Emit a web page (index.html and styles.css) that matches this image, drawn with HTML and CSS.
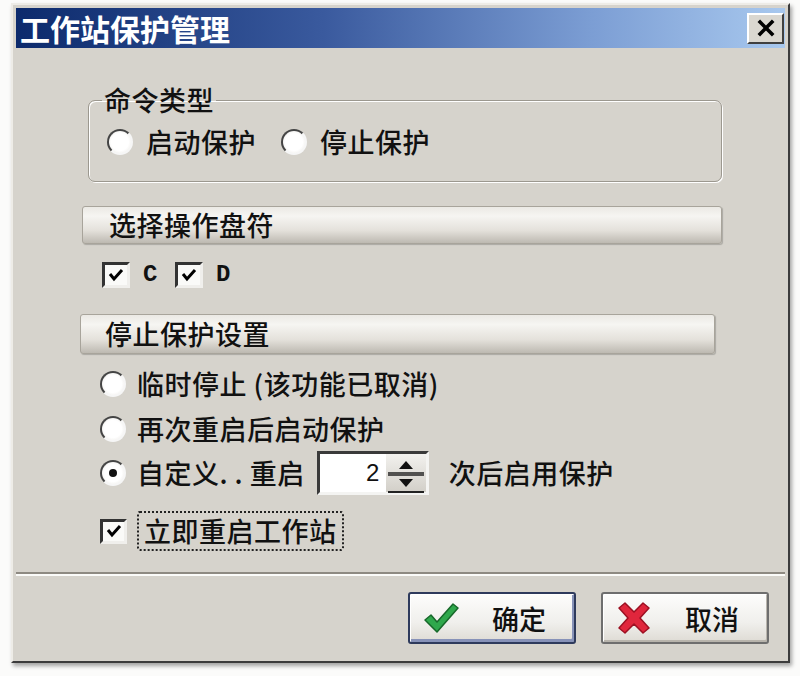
FILE: index.html
```html
<!DOCTYPE html>
<html>
	<head>
		<meta charset="utf-8">
		<link rel="stylesheet" href="styles.css">
	</head>
	<body>
		<div class="window">
			<div class="titlebar">
				<span class="title">工作站保护管理</span>
				<span class="close">
					<svg viewBox="0 0 20 18" width="24" height="22">
						<path d="M4 3 L16 15 M16 3 L4 15" stroke="#000" stroke-width="3"/>
					</svg>
				</span>
			</div>
			<div class="content">
				<fieldset class="group">
					<legend>命令类型</legend>
					<div class="row">
						<span class="radio"></span>
						<span class="label">启动保护</span>
						<span class="radio left-27"></span>
						<span class="label">停止保护</span>
					</div>
				</fieldset>
				<div class="bar bar-drive">选择操作盘符</div>
				<div class="drives">
					<span class="check">
						<svg viewBox="0 0 20 20" width="20" height="20"><path d="M4 9 L8 14 L16 5" fill="none" stroke="#000" stroke-width="3"/></svg>
					</span>
					<span class="letter">C</span>
					<span class="check">
						<svg viewBox="0 0 20 20" width="20" height="20"><path d="M4 9 L8 14 L16 5" fill="none" stroke="#000" stroke-width="3"/></svg>
					</span>
					<span class="letter">D</span>
				</div>
				<div class="bar bar-stop">停止保护设置</div>
				<div class="opts">
					<div class="line line-1">
						<span class="radio"></span>
						<span class="label">临时停止 (该功能已取消)</span>
					</div>
					<div class="line line-2">
						<span class="radio"></span>
						<span class="label">再次重启后启动保护</span>
					</div>
					<div class="line line-3">
						<span class="radio on"></span>
						<span class="label">自定义. . 重启</span>
						<div class="spin">
							<span class="spin-value">2</span>
							<span class="spin-btns">
								<svg viewBox="0 0 40 40" width="40" height="40">
									<path d="M2 19 H38 M2 21 H38" stroke="#222" stroke-width="1.5"/>
									<path d="M2 38 H38" stroke="#222" stroke-width="2"/>
									<path d="M13 15 L20 7 L27 15 Z" fill="#111"/>
									<path d="M13 25 L20 33 L27 25 Z" fill="#111"/>
								</svg>
							</span>
						</div>
						<span class="label left-20">次后启用保护</span>
					</div>
					<div class="line line-4">
						<span class="check small">
							<svg viewBox="0 0 20 20" width="20" height="20"><path d="M4 9 L8 14 L16 5" fill="none" stroke="#000" stroke-width="3"/></svg>
						</span>
						<span class="focus">立即重启工作站</span>
					</div>
				</div>
			</div>
			<div class="sep"></div>
			<div class="footer">
				<button class="btn btn-default">
					<svg viewBox="0 0 36 32" width="36" height="32">
						<path d="M2 18 L8 13 L14 20 L30 2 L35 6 L14 30 Z" fill="#2fa84c" stroke="#17682a" stroke-width="1.5" stroke-linejoin="round"/>
					</svg>
					<span class="btn-text">确定</span>
				</button>
				<button class="btn">
					<svg viewBox="0 0 36 32" width="36" height="32">
						<path d="M3 6 L9 1 L18 10 L27 1 L33 6 L24 16 L33 26 L27 31 L18 22 L9 31 L3 26 L12 16 Z" fill="#e0263c" stroke="#9c1022" stroke-width="1.5" stroke-linejoin="round"/>
					</svg>
					<span class="btn-text">取消</span>
				</button>
			</div>
		</div>
	</body>
</html>
```

FILE: styles.css
```css
*{
	margin: 0;
	padding: 0;
	box-sizing: border-box;
}
html,body{
	height: 100%;
	width: 100%;
}
body{
	background: #fbfbfa;
	font-family: "Noto Sans CJK SC", "Liberation Sans", sans-serif;
	font-size: 27px;
	font-weight: 500;
	letter-spacing: 0.5px;
	color: #111;
}
.window{
	margin: 3px 0 0 11px;
	width: 779px;
	height: 660px;
	padding: 3px;
	background: #d6d3cc;
	border: 2px solid;
	border-color: #eeece7 #3c3c3c #3c3c3c #eeece7;
	box-shadow: 2px 3px 4px rgba(0,0,0,.35);
}
.titlebar{
	height: 40px;
	display: flex;
	align-items: center;
	justify-content: space-between;
	padding: 0 1px 0 4px;
	background: linear-gradient(to right, #0c2a6c, #3a5a9e 40%, #7c9ed4 75%, #a8c8ee);
}
.title{
	color: #fff;
	font-weight: bold;
	font-size: 30px;
	line-height: 40px;
	letter-spacing: 0;
}
.close{
	width: 37px;
	height: 31px;
	display: flex;
	align-items: center;
	justify-content: center;
	background: #dad7d0;
	border: 2px solid;
	border-color: #fff #404040 #404040 #fff;
}
.content{
	padding-left: 66px;
}
.group{
	margin: 38px 0 0 6px;
	width: 634px;
	padding: 13px 0 24px 18px;
	border: 1px solid #9c988f;
	border-radius: 7px;
	box-shadow: inset 1px 1px 0 #fff, 1px 1px 0 #fff;
}
.group legend{
	line-height: 28px;
	padding: 0 2px;
	margin-left: -5px;
}
.row{
	display: flex;
	align-items: center;
	height: 30px;
}
.label{
	line-height: 30px;
	white-space: nowrap;
}
.radio{
	width: 26px;
	height: 26px;
	flex: none;
	margin-right: 13px;
	border-radius: 50%;
	border: 2px solid;
	border-color: #444 #f6f6f6 #f6f6f6 #444;
	background: radial-gradient(circle, #fff 55%, #e8e6e1);
	display: flex;
	align-items: center;
	justify-content: center;
}
.radio.on::after{
	content: "";
	width: 8px;
	height: 8px;
	border-radius: 50%;
	background: #111;
}
.left-27{
	margin-left: 25px;
}
.left-20{
	margin-left: 20px;
}
.bar{
	height: 38px;
	width: 640px;
	line-height: 36px;
	padding-left: 26px;
	border: 1px solid #a8a49b;
	border-radius: 3px;
	background: linear-gradient(#ebe9e4, #f6f5f2 25%, #e4e1db 65%, #bdb9b1);
	box-shadow: 1px 1px 1px rgba(0,0,0,.2);
}
.bar-drive{
	margin-top: 24px;
}
.bar-stop{
	margin: 27px 0 0 -2px;
	width: 635px;
	height: 40px;
	line-height: 38px;
	padding-left: 24px;
}
.drives{
	margin: 18px 0 0 20px;
	height: 25px;
	display: flex;
	align-items: center;
}
.check{
	width: 28px;
	height: 26px;
	flex: none;
	display: flex;
	align-items: center;
	justify-content: center;
	background: #fafaf8;
	border: 3px solid;
	border-color: #333 #f0efec #f0efec #333;
}
.letter{
	font-family: "Liberation Mono", monospace;
	font-size: 24px;
	font-weight: bold;
	margin: 0 17px 0 13px;
}
.opts{
	margin-left: 18px;
	margin-top: 7px;
}
.line{
	display: flex;
	align-items: center;
	height: 44px;
}
.line-1{
	height: 46px;
}
.line .radio{
	margin-right: 11px;
}
.line-4{
	margin-top: 16px;
	height: 40px;
}
.check.small{
	width: 27px;
	height: 25px;
}
.focus{
	margin-left: 10px;
	height: 40px;
	line-height: 36px;
	padding: 0 5px;
	border: 2px dotted #222;
	border-radius: 3px;
	white-space: nowrap;
}
.spin{
	margin-left: 12px;
	width: 112px;
	height: 44px;
	display: flex;
	align-items: center;
	background: #fff;
	border: 3px solid;
	border-color: #3a3a3a #f4f4f2 #f4f4f2 #3a3a3a;
}
.spin-value{
	flex: 1;
	text-align: right;
	padding-right: 6px;
	font-family: "Liberation Sans", sans-serif;
	font-size: 24px;
}
.spin-btns{
	width: 40px;
	height: 38px;
	display: flex;
	background: linear-gradient(#f2f1ee, #d2cfc8);
}
.sep{
	margin-top: 21px;
	height: 4px;
	border-top: 2px solid #8e8a82;
	border-bottom: 2px solid #fbfbf9;
}
.footer{
	display: flex;
	justify-content: flex-end;
	gap: 25px;
	padding: 16px 16px 0 0;
}
.btn{
	width: 168px;
	height: 52px;
	display: flex;
	align-items: center;
	padding-left: 13px;
	font-family: inherit;
	font-size: 27px;
	font-weight: 500;
	color: #111;
	border: 2px solid #6e6e6e;
	border-radius: 3px;
	background: linear-gradient(#fdfdfc, #f0efec 60%, #dedbd4);
	box-shadow: inset 1px 1px 0 #fff, inset -1px -2px 0 #b8b4ac;
}
.btn-default{
	border-color: #2e3a5c;
	box-shadow: inset 1px 1px 0 #fff, inset -2px -3px 0 #8792b8;
}
.btn-text{
	margin-left: 33px;
}
```
